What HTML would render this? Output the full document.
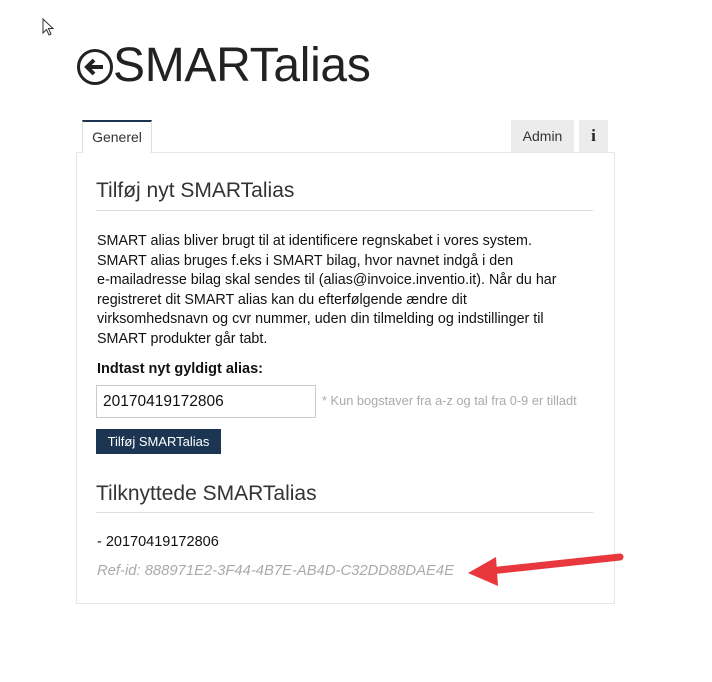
<html><head><style>
body{margin:0;width:712px;height:682px;background:#fff;font-family:"Liberation Sans",sans-serif;position:relative;overflow:hidden;color:#222}
.a{position:absolute;white-space:nowrap}
</style></head><body>
<svg class="a" style="left:42px;top:18px" width="14" height="20"><path d="M1 1 L1 15 L4.5 11.5 L7 17 L9 16 L6.5 10.5 L11 10.5 Z" fill="#fff" stroke="#333" stroke-width="1"/></svg>
<svg class="a" style="left:76px;top:48px" width="38" height="38"><circle cx="19" cy="19" r="16.5" fill="none" stroke="#222" stroke-width="3"/><path d="M27 19 H12 M18 12 L11 19 L18 26" fill="none" stroke="#222" stroke-width="4"/></svg>
<div class="a" style="left:113px;top:38px;font-size:48px;font-weight:300;color:#222;letter-spacing:-0.3px">SMARTalias</div>
<div class="a" style="left:76px;top:152px;width:537px;height:450px;border:1px solid #e6e6e6"></div>
<div class="a" style="left:82px;top:120px;width:70px;height:33px;background:#fff;border-top:2px solid #1c3550;border-left:1px solid #ddd;border-right:1px solid #ddd;box-sizing:border-box;font-size:14px;line-height:31px;text-align:center;color:#333">Generel</div>
<div class="a" style="left:511px;top:120px;width:63px;height:32px;background:#ececec;font-size:14px;line-height:32px;text-align:center;color:#333">Admin</div>
<div class="a" style="left:579px;top:120px;width:29px;height:32px;background:#ececec;font-size:17px;line-height:32px;text-align:center;font-weight:bold;font-family:'Liberation Serif',serif">i</div>
<div class="a" style="left:96px;top:179px;font-size:21px;color:#333">Tilføj nyt SMARTalias</div>
<div class="a" style="left:96px;top:210px;width:497px;height:1px;background:#ddd"></div>
<div class="a" style="left:97px;top:232px;font-size:14.3px;line-height:19.6px;color:#111">SMART alias bliver brugt til at identificere regnskabet i vores system.<br>SMART alias bruges f.eks i SMART bilag, hvor navnet indgå i den<br>e-mailadresse bilag skal sendes til (alias@invoice.inventio.it). Når du har<br>registreret dit SMART alias kan du efterfølgende ændre dit<br>virksomhedsnavn og cvr nummer, uden din tilmelding og indstillinger til<br>SMART produkter går tabt.</div>
<div class="a" style="left:97px;top:361px;font-size:14.5px;font-weight:bold;color:#111">Indtast nyt gyldigt alias:</div>
<div class="a" style="left:96px;top:385px;width:220px;height:33px;border:1px solid #ccc;box-sizing:border-box;font-size:15.5px;line-height:31px;padding-left:6px;color:#111">20170419172806</div>
<div class="a" style="left:322px;top:393px;font-size:12.8px;color:#aaa">* Kun bogstaver fra a-z og tal fra 0-9 er tilladt</div>
<div class="a" style="left:96px;top:429px;width:125px;height:25px;background:#1b3553;color:#fff;font-size:13px;line-height:25px;text-align:center">Tilføj SMARTalias</div>
<div class="a" style="left:96px;top:482px;font-size:21px;color:#333">Tilknyttede SMARTalias</div>
<div class="a" style="left:96px;top:512px;width:497px;height:1px;background:#ddd"></div>
<div class="a" style="left:97px;top:534px;font-size:14.5px;color:#111">- 20170419172806</div>
<div class="a" style="left:97px;top:563px;font-size:14.8px;color:#aaa;font-style:italic">Ref-id: 888971E2-3F44-4B7E-AB4D-C32DD88DAE4E</div>
<svg class="a" style="left:460px;top:545px" width="170" height="45"><path d="M160 12 L30 26" stroke="#e8383d" stroke-width="7" stroke-linecap="round"/><path d="M8 28 L36 12 L38 41 Z" fill="#e8383d"/></svg>
</body></html>
